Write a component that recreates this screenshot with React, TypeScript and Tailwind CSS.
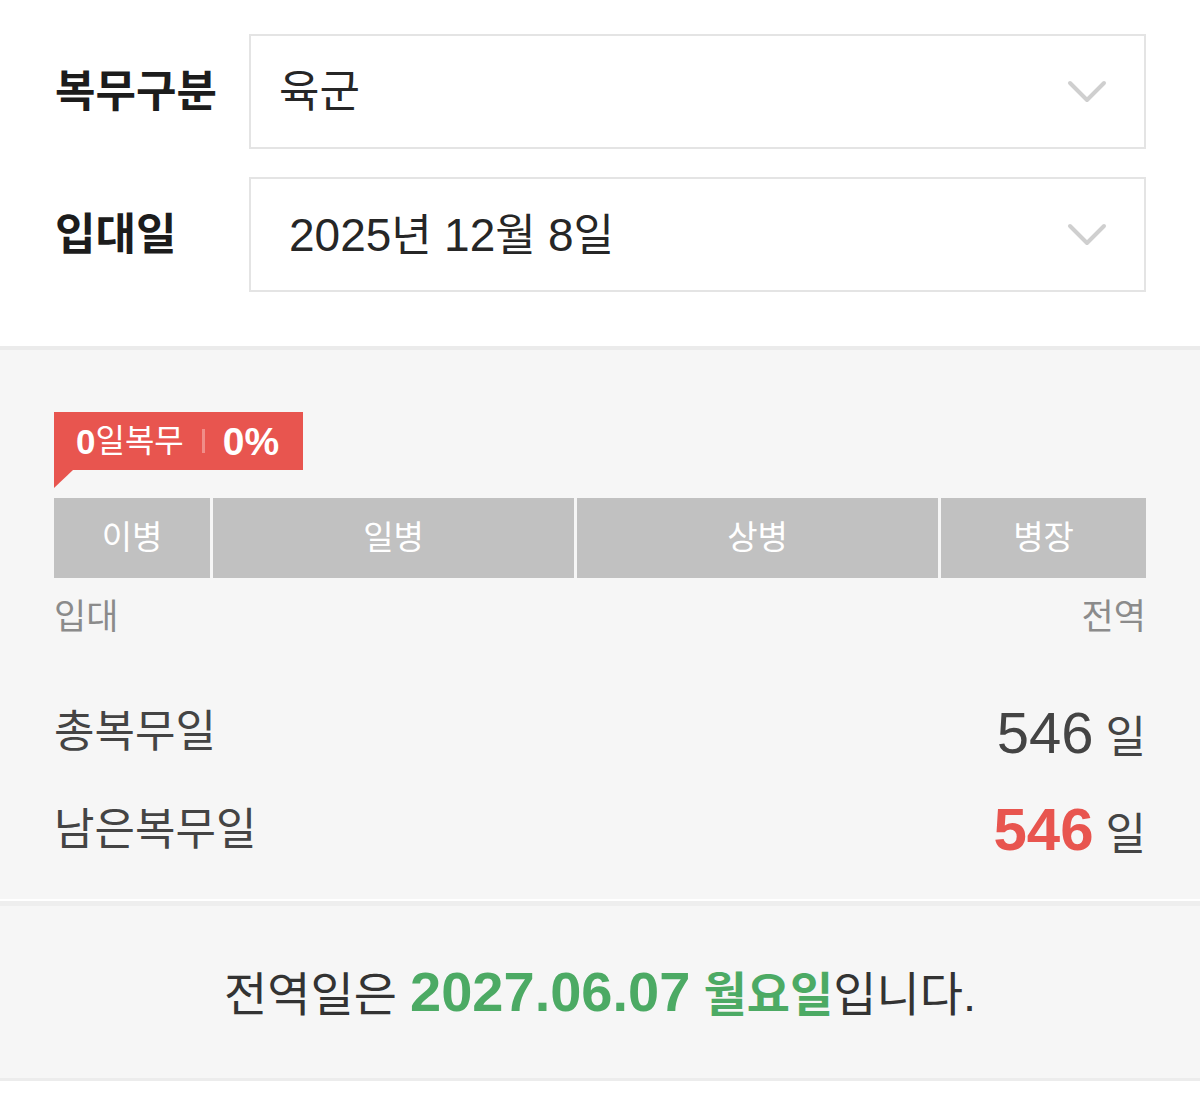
const FONT = "font-['Liberation_Sans','Noto_Sans_CJK_KR',sans-serif]";

function Chevron() {
  return (
    <svg width="40" height="24" viewBox="0 0 40 24" fill="none">
      <path d="M3 3 L20 20 L37 3" stroke="#cfcfcf" strokeWidth="4" strokeLinecap="round" strokeLinejoin="round" />
    </svg>
  );
}

function SelectRow({ label, children, pl }: { label: string; children: React.ReactNode; pl: string }) {
  return (
    <div className="flex items-center">
      <div className="w-[194px] text-[44px] font-bold text-[#1c1c1c] leading-none">{label}</div>
      <div className={`flex-1 h-[115px] border-2 border-[#e4e4e4] bg-white flex items-center justify-between pr-[37px] ${pl}`}>
        <div className="text-[44px] text-[#262626] leading-none">{children}</div>
        <Chevron />
      </div>
    </div>
  );
}

export default function App() {
  const ranks = [
    { name: '이병', w: 'w-[156px]' },
    { name: '일병', w: 'w-[361px]' },
    { name: '상병', w: 'w-[361px]' },
    { name: '병장', w: 'flex-1' },
  ];

  return (
    <div className={`${FONT} w-full min-h-[1117px] bg-white`}>
      {/* Inputs */}
      <section className="pt-[34px] pb-[54px] pl-[55px] pr-[54px] flex flex-col gap-[28px] border-b-4 border-[#ebebeb]">
        <SelectRow label="복무구분" pl="pl-[28px]">육군</SelectRow>
        <SelectRow label="입대일" pl="pl-[38px]">
          <span className="text-[46px]">2025</span>년 <span className="text-[46px]">12</span>월 <span className="text-[46px]">8</span>일
        </SelectRow>
      </section>

      {/* Progress */}
      <section className="bg-[#f6f6f6] pt-[62px] pb-[20px] px-[54px]">
        <div className="inline-flex items-center h-[58px] bg-[#e8554f] pl-[22px] pr-[24px] text-white leading-none">
          <span className="text-[35px] font-bold">0</span>
          <span className="text-[32px]">일복무</span>
          <span className="mx-[18px] w-[3px] h-[24px] bg-[#f08d88]" />
          <span className="text-[39px] font-bold">0%</span>
        </div>
        <svg width="19" height="18" viewBox="0 0 19 18" className="block">
          <polygon points="0,0 19,0 0,18" fill="#e8554f" />
        </svg>
        <div className="mt-[10px] flex gap-[3px] h-[80px]">
          {ranks.map((r) => (
            <div key={r.name} className={`${r.w} bg-[#c1c1c1] flex items-center justify-center text-white text-[33px]`}>
              {r.name}
            </div>
          ))}
        </div>
        <div className="mt-[19px] h-[40px] flex items-center justify-between text-[35px] text-[#8b8b8b]">
          <span>입대</span>
          <span>전역</span>
        </div>
        <div className="mt-[46px] h-[98px] flex items-center justify-between text-[#444444]">
          <span className="text-[44px]">총복무일</span>
          <span className="text-[44px] flex items-baseline">
            <span className="text-[58px] mr-[12px]">546</span>일
          </span>
        </div>
        <div className="h-[98px] flex items-center justify-between text-[#444444]">
          <span className="text-[44px]">남은복무일</span>
          <span className="text-[44px] flex items-baseline">
            <span className="text-[60px] font-bold text-[#e8554f] mr-[12px]">546</span>일
          </span>
        </div>
      </section>
      <div className="h-[2px] bg-white" />
      <div className="h-[5px] bg-[#eeeeee]" />

      {/* Discharge date */}
      <section className="bg-[#f6f6f6] h-[175px] flex items-center justify-center border-b-[3px] border-[#ececec]">
        <p className="text-[47px] text-[#333333] leading-none">
          전역일은 <span className="text-[56px] font-bold text-[#4caa64]">2027.06.07</span>{' '}
          <span className="font-semibold text-[#4caa64]">월요일</span>입니다.
        </p>
      </section>
    </div>
  );
}
